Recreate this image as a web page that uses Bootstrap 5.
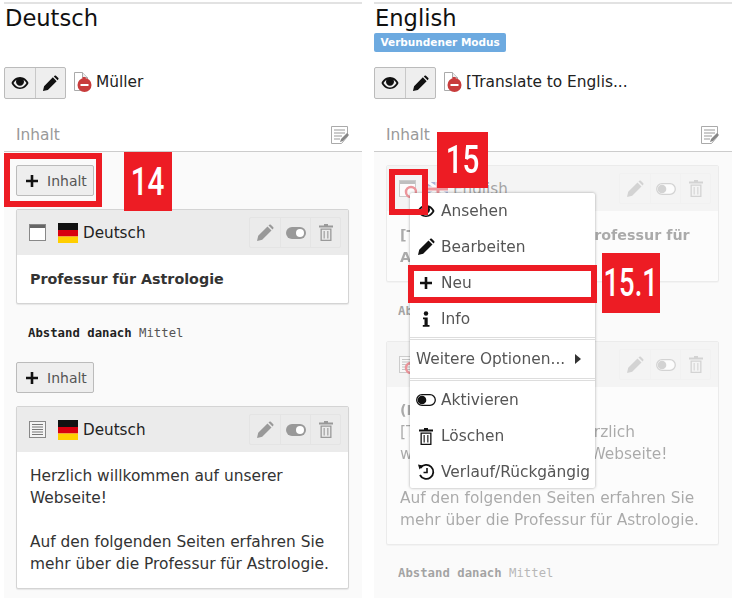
<!DOCTYPE html>
<html lang="de">
<head>
    <meta charset="UTF-8">
    <meta name="viewport" content="width=device-width, initial-scale=1.0">
    <title>Seitenmodul Sprachen</title>
    <link href="https://cdn.jsdelivr.net/npm/bootstrap@5.3.0/dist/css/bootstrap.min.css" rel="stylesheet">
    <style>
        body {
            background: #fff;
            color: #222;
            font-family: "DejaVu Sans", sans-serif;
            font-size: 15.4px;
            line-height: 22px;
            overflow: hidden;
            height: 598px;
            position: relative;
        }
        .lang-cols { display: flex; gap: 12px; padding: 2px 7px 0 4px; }
        .lang-col { width: 358px; flex: none; border-top: 2px solid #e2e2e2; }
        .lang-title { font-size: 22.6px; line-height: 28px; font-weight: 400; margin: 0; color: #111; padding-left: 1px; height: 29px; }
        .mode-label { display: inline-block; background: #6daae0; color: #fff; font-size: 10.5px; font-weight: 700; line-height: 19px; height: 19px; padding: 0 6.500px; border-radius: 2px; vertical-align: top; }
        .mode-slot { height: 34px; }
        .page-row { display: flex; align-items: center; height: 32px; }
        .t3-group { display: flex; border: 1px solid #bbb; border-radius: 2px; background: #eee; }
        .t3-group > span { width: 30px; height: 30px; display: flex; align-items: center; justify-content: center; color: #111; }
        .t3-group > span + span { border-left: 1px solid #c8c8c8; }
        .page-doc { margin: 0 4px 0 8px; position: relative; top: -1px; }
        .page-name { color: #222; position: relative; top: -1px; }
        .colhead { display: flex; justify-content: space-between; align-items: center; height: 34px; margin-top: 19px; padding: 0 13px 0 12px; color: #999; border-bottom: 1px solid #ccc; }
        .colbody { background: #fafafa; padding: 13px 13px 0 12px; height: 446px; }
        .add-btn { display: inline-flex; align-items: center; gap: 9px; width: 78px; height: 31px; padding: 0 0 0 9px; background: #eee; border: 1px solid #bbb; border-radius: 2px; font-size: 14px; color: #555; vertical-align: top; }
        .ce-card { background: #fff; border: 1px solid #d4d4d4; border-radius: 2px; margin-top: 13px; box-shadow: 0 1px 1px rgba(0,0,0,.08); }
        .ce-head { background: #ebebeb; height: 45px; display: flex; align-items: center; padding: 0 7px 0 12px; color: #222; font-size: 15.2px; }
        .ce-head .flag-box { margin-left: 11px; margin-right: 5px; display: flex; }
        .ce-tools { margin-left: auto; display: flex; border: 1px solid #e4e4e4; border-radius: 2px; color: #999; }
        .ce-tools > span { width: 30px; height: 29px; display: flex; align-items: center; justify-content: center; }
        .ce-tools > span + span { border-left: 1px solid #e4e4e4; }
        .ce-body { padding: 13px 12px 13px 13px; color: #333; }
        .ce-body p { margin: 0; }
        .ce-body .gap-line { height: 22px; }
        .ce-body strong { color: #333; font-size: 14.3px; }
        .ce-body .title-line { line-height: 21px; }
        .ce-meta { font-family: "DejaVu Sans Mono", monospace; font-size: 12.3px; line-height: 18px; color: #555; padding-left: 12px; margin: 20px 0; }
        .ce-meta b { color: #222; }
        .dim { opacity: .4; }
        .col-en .ce-card:first-child { margin-top: 0; }
        .col-en .ce-meta { margin: 20px 0 21px; }
        .col-en .ce-card + .ce-meta + .ce-card + .ce-meta { margin-top: 19px; }
        .ctx-menu { position: absolute; left: 410px; top: 193px; width: 185px; height: 295px; overflow: hidden; background: #fff; border-radius: 2px; box-shadow: 0 0 3px rgba(0,0,0,.35); color: #555; z-index: 5; }
        .ctx-item { height: 36px; display: flex; align-items: center; gap: 5px; padding-left: 6px; white-space: nowrap; }
        .ctx-item svg { flex: none; }
        .ctx-divider { border-top: 1px solid #ddd; height: 3px; border-bottom: 1px solid #ddd; }
        .ctx-more { height: 38px; display: flex; align-items: center; padding-left: 6px; }
        .ctx-more svg { margin-left: 10px; }
        .ctx-tight { margin-top: 1px; }
        .ctx-icon { color: #111; }
        .mark-box { position: absolute; border: 6px solid #ed1c24; z-index: 6; }
        .mark-num { position: absolute; background: #ed1c24; color: #fff; font-family: "Roboto", sans-serif; font-weight: 500; display: flex; align-items: center; justify-content: center; z-index: 7; font-size: 38px; line-height: 1; }
        .mark-num span { display: block; transform: scaleX(.78); white-space: nowrap; }
        .mark-num.mark-151 span { transform: scaleX(.72); }
        .mark-14 { left: 124px; top: 152px; width: 48px; height: 59px; }
        .mark-15 { left: 437px; top: 132px; width: 51px; height: 56px; }
        .mark-151 { left: 602px; top: 253px; width: 58px; height: 60px; }
        .box-14 { left: 4px; top: 153px; width: 98px; height: 54px; }
        .box-15 { left: 389px; top: 169px; width: 39px; height: 46px; }
        .box-151 { left: 408px; top: 265px; width: 189px; height: 38px; }
    </style>
</head>
<body>
    <svg width="0" height="0" class="d-block">
        <defs>
            <symbol id="i-eye" viewBox="0 0 18 14"><path d="M9 1C5 1 1.800 3.800 .5 7 1.800 10.200 5 13 9 13s7.200-2.800 8.500-6C16.200 3.800 13 1 9 1zM9 11.500C6.500 11.500 4 9.700 2.500 7 3.300 5.600 4.300 4.500 5.500 3.700 5.200 4.300 5 5 5 5.800 5 8 6.800 9.800 9 9.800s4-1.800 4-4c0-.8-.2-1.500-.5-2.100 1.200.8 2.200 1.900 3 3.300-1.500 2.700-4 4.500-6.500 4.500z" fill="#111"/></symbol>
            <symbol id="i-pen" viewBox="0 0 18 18"><path d="M1 17l1.200-5.200L11.500 2.500l4 4L6.200 15.800zM12.500 1.500l.9-.8c.5-.4 1-.4 1.400 0l2.500 2.500c.4.400.4.900 0 1.400l-.8.900z" fill="currentColor"/></symbol>
            <symbol id="i-trash" viewBox="0 0 14 17"><path d="M5 0h4v1.500h5V3.500H0V1.500h5zM1.500 4.500h11V17h-11zM2.800 5.800v9.900h8.400V5.800zM4.600 7h1.100v7.500H4.600zM8.300 7h1.100v7.500H8.300z" fill="currentColor" fill-rule="evenodd"/></symbol>
            <symbol id="i-toggle" viewBox="0 0 20 12"><path d="M6 0h8a6 6 0 0 1 0 12H6A6 6 0 0 1 6 0z" fill="currentColor"/><circle cx="14" cy="6" r="4" fill="#fff"/></symbol>
            <symbol id="i-toggle-off" viewBox="0 0 20 12"><path d="M6 .7h8a5.300 5.300 0 0 1 0 10.600H6A5.300 5.300 0 0 1 6 .7z" fill="#fff" stroke="currentColor" stroke-width="1.300"/><circle cx="6" cy="6" r="4.300" fill="currentColor"/></symbol>
            <symbol id="i-doc" viewBox="0 0 18 21"><path d="M.5.500h8l5 5v13H.5z" fill="#fff" stroke="#aaa"/><path d="M8.500.500v5h5" fill="#eee" stroke="#aaa"/><rect x="8.500" y="5" width="3" height="3" fill="#c83c3c"/><circle cx="10.500" cy="13" r="7" fill="#c83c3c"/><rect x="6.500" y="12" width="8" height="2" fill="#fff"/></symbol>
            <symbol id="i-note" viewBox="0 0 18 18"><path d="M.5.5h16v10l-6 7H.5z" fill="#fff" stroke="#aaa"/><path d="M3 4h11M3 7h11M3 10h8M3 13h6" stroke="#999" stroke-width="1.200"/><path d="M9 16l1-3 6-6 2 2-6 6z" fill="#888"/></symbol>
            <symbol id="i-flag" viewBox="0 0 20 20"><rect width="20" height="7" fill="#111"/><rect y="7" width="20" height="6.500" fill="#d8000f"/><rect y="13.500" width="20" height="6.500" fill="#ffce00"/></symbol>
            <symbol id="i-flag-en" viewBox="0 0 20 20"><rect y="3" width="20" height="14" fill="#3a4a9f"/><path d="M0 3l20 14M20 3L0 17" stroke="#fff" stroke-width="3"/><path d="M10 3v14M0 10h20" stroke="#fff" stroke-width="5"/><path d="M10 3v14M0 10h20" stroke="#d8000f" stroke-width="3"/></symbol>
            <symbol id="i-ce-head" viewBox="0 0 18 18"><rect x=".5" y=".5" width="16" height="16" fill="#fff" stroke="#888"/><rect x="1" y="1" width="15" height="3" fill="#666"/></symbol>
            <symbol id="i-ce-text" viewBox="0 0 18 18"><rect x=".5" y=".5" width="16" height="16" fill="#f4f4f4" stroke="#888"/><path d="M3 3.500h11M3 6h11M3 8.500h11M3 11h11M3 13.500h11" stroke="#777"/></symbol>
            <symbol id="i-ce-over" viewBox="0 0 18 18"><circle cx="12" cy="12" r="5" fill="none" stroke="#d8000f" stroke-width="2.500"/></symbol>
            <symbol id="i-plus" viewBox="0 0 12 12"><path d="M4.700 0h2.600v4.700H12v2.600H7.300V12H4.700V7.300H0V4.700h4.700z" fill="#111"/></symbol>
            <symbol id="i-info" viewBox="0 0 20 18"><circle cx="10" cy="3.500" r="2.200" fill="#111"/><path d="M7 7.500h4.700v7.500H13.500v1.800H6.800V15h1.700V9.300H7z" fill="#111"/></symbol>
            <symbol id="i-clock" viewBox="0 0 18 18"><path d="M3.500 5A7 7 0 1 1 3 12" fill="none" stroke="#111" stroke-width="1.800"/><path d="M1 1.500l5 1-3.500 4z" fill="#111"/><path d="M10 5v4.500H6.500" fill="none" stroke="#111" stroke-width="1.600"/></symbol>
        </defs>
    </svg>

    <div class="lang-cols">
        <div class="lang-col">
            <h1 class="lang-title">Deutsch</h1>
            <div class="mode-slot"></div>
            <div class="page-row">
                <div class="t3-group">
                    <span><svg width="18" height="14"><use href="#i-eye"/></svg></span>
                    <span><svg width="17" height="17"><use href="#i-pen"/></svg></span>
                </div>
                <svg class="page-doc" width="18" height="21"><use href="#i-doc"/></svg>
                <span class="page-name">Müller</span>
            </div>
            <div class="colhead"><span>Inhalt</span><svg width="18" height="18"><use href="#i-note"/></svg></div>
            <div class="colbody">
                <div class="add-btn"><svg width="12" height="12"><use href="#i-plus"/></svg>Inhalt</div>
                <div class="ce-card">
                    <div class="ce-head">
                        <svg width="18" height="18"><use href="#i-ce-head"/></svg>
                        <span class="flag-box"><svg width="20" height="20"><use href="#i-flag"/></svg></span>
                        Deutsch
                        <div class="ce-tools">
                            <span><svg width="18" height="18"><use href="#i-pen"/></svg></span>
                            <span><svg width="20" height="12"><use href="#i-toggle"/></svg></span>
                            <span><svg width="14" height="17"><use href="#i-trash"/></svg></span>
                        </div>
                    </div>
                    <div class="ce-body"><p><strong>Professur für Astrologie</strong></p></div>
                </div>
                <p class="ce-meta"><b>Abstand danach</b> Mittel</p>
                <div class="add-btn"><svg width="12" height="12"><use href="#i-plus"/></svg>Inhalt</div>
                <div class="ce-card">
                    <div class="ce-head">
                        <svg width="18" height="18"><use href="#i-ce-text"/></svg>
                        <span class="flag-box"><svg width="20" height="20"><use href="#i-flag"/></svg></span>
                        Deutsch
                        <div class="ce-tools">
                            <span><svg width="18" height="18"><use href="#i-pen"/></svg></span>
                            <span><svg width="20" height="12"><use href="#i-toggle"/></svg></span>
                            <span><svg width="14" height="17"><use href="#i-trash"/></svg></span>
                        </div>
                    </div>
                    <div class="ce-body">
                        <p>Herzlich willkommen auf unserer Webseite!</p>
                        <div class="gap-line"></div>
                        <p>Auf den folgenden Seiten erfahren Sie mehr über die Professur für Astrologie.</p>
                    </div>
                </div>
            </div>
        </div>

        <div class="lang-col col-en">
            <h1 class="lang-title">English</h1>
            <div class="mode-slot"><span class="mode-label">Verbundener Modus</span></div>
            <div class="page-row">
                <div class="t3-group">
                    <span><svg width="18" height="14"><use href="#i-eye"/></svg></span>
                    <span><svg width="17" height="17"><use href="#i-pen"/></svg></span>
                </div>
                <svg class="page-doc" width="18" height="21"><use href="#i-doc"/></svg>
                <span class="page-name">[Translate to Englis...</span>
            </div>
            <div class="colhead"><span>Inhalt</span><svg width="18" height="18"><use href="#i-note"/></svg></div>
            <div class="colbody">
                <div class="ce-card dim">
                    <div class="ce-head">
                        <svg width="18" height="18"><use href="#i-ce-head"/><use href="#i-ce-over"/></svg>
                        <span class="flag-box"><svg width="20" height="20"><use href="#i-flag-en"/></svg></span>
                        English
                        <div class="ce-tools">
                            <span><svg width="18" height="18"><use href="#i-pen"/></svg></span>
                            <span><svg width="20" height="12"><use href="#i-toggle-off"/></svg></span>
                            <span><svg width="14" height="17"><use href="#i-trash"/></svg></span>
                        </div>
                    </div>
                    <div class="ce-body"><p><strong>[Translate to English:] Professur für Astrologie</strong></p></div>
                </div>
                <p class="ce-meta dim"><b>Abstand danach</b> Mittel</p>
                <div class="ce-card dim">
                    <div class="ce-head">
                        <svg width="18" height="18"><use href="#i-ce-text"/><use href="#i-ce-over"/></svg>
                        <span class="flag-box"><svg width="20" height="20"><use href="#i-flag-en"/></svg></span>
                        English
                        <div class="ce-tools">
                            <span><svg width="18" height="18"><use href="#i-pen"/></svg></span>
                            <span><svg width="20" height="12"><use href="#i-toggle-off"/></svg></span>
                            <span><svg width="14" height="17"><use href="#i-trash"/></svg></span>
                        </div>
                    </div>
                    <div class="ce-body">
                        <p class="title-line"><strong>(Kopie)</strong></p>
                        <p>[Translate to English:] Herzlich willkommen auf unserer Webseite!</p>
                        <div class="gap-line"></div>
                        <p>Auf den folgenden Seiten erfahren Sie mehr über die Professur für Astrologie.</p>
                    </div>
                </div>
                <p class="ce-meta dim"><b>Abstand danach</b> Mittel</p>
            </div>
        </div>
    </div>

    <div class="ctx-menu">
        <div class="ctx-item"><svg width="20" height="14"><use href="#i-eye" width="20" height="14"/></svg>Ansehen</div>
        <div class="ctx-item"><svg width="20" height="18" class="ctx-icon"><use href="#i-pen" x="1" width="18" height="18"/></svg>Bearbeiten</div>
        <div class="ctx-item"><svg width="20" height="12"><use href="#i-plus" x="4" width="12" height="12"/></svg>Neu</div>
        <div class="ctx-item"><svg width="20" height="18"><use href="#i-info"/></svg>Info</div>
        <div class="ctx-divider"></div>
        <div class="ctx-more">Weitere Optionen...<svg width="6" height="10"><path d="M0 0l6 5-6 5z" fill="#333"/></svg></div>
        <div class="ctx-divider"></div>
        <div class="ctx-item ctx-tight"><svg width="20" height="12" class="ctx-icon"><use href="#i-toggle-off"/></svg>Aktivieren</div>
        <div class="ctx-item"><svg width="20" height="17" class="ctx-icon"><use href="#i-trash" x="3" width="14" height="17"/></svg>Löschen</div>
        <div class="ctx-item"><svg width="20" height="18"><use href="#i-clock" x="1" width="18" height="18"/></svg>Verlauf/Rückgängig</div>
    </div>

    <div class="mark-box box-14"></div>
    <div class="mark-num mark-14"><span>14</span></div>
    <div class="mark-box box-15"></div>
    <div class="mark-num mark-15"><span>15</span></div>
    <div class="mark-box box-151"></div>
    <div class="mark-num mark-151"><span>15.1</span></div>

    <script src="https://cdn.jsdelivr.net/npm/bootstrap@5.3.0/dist/js/bootstrap.bundle.min.js"></script>
</body>
</html>
